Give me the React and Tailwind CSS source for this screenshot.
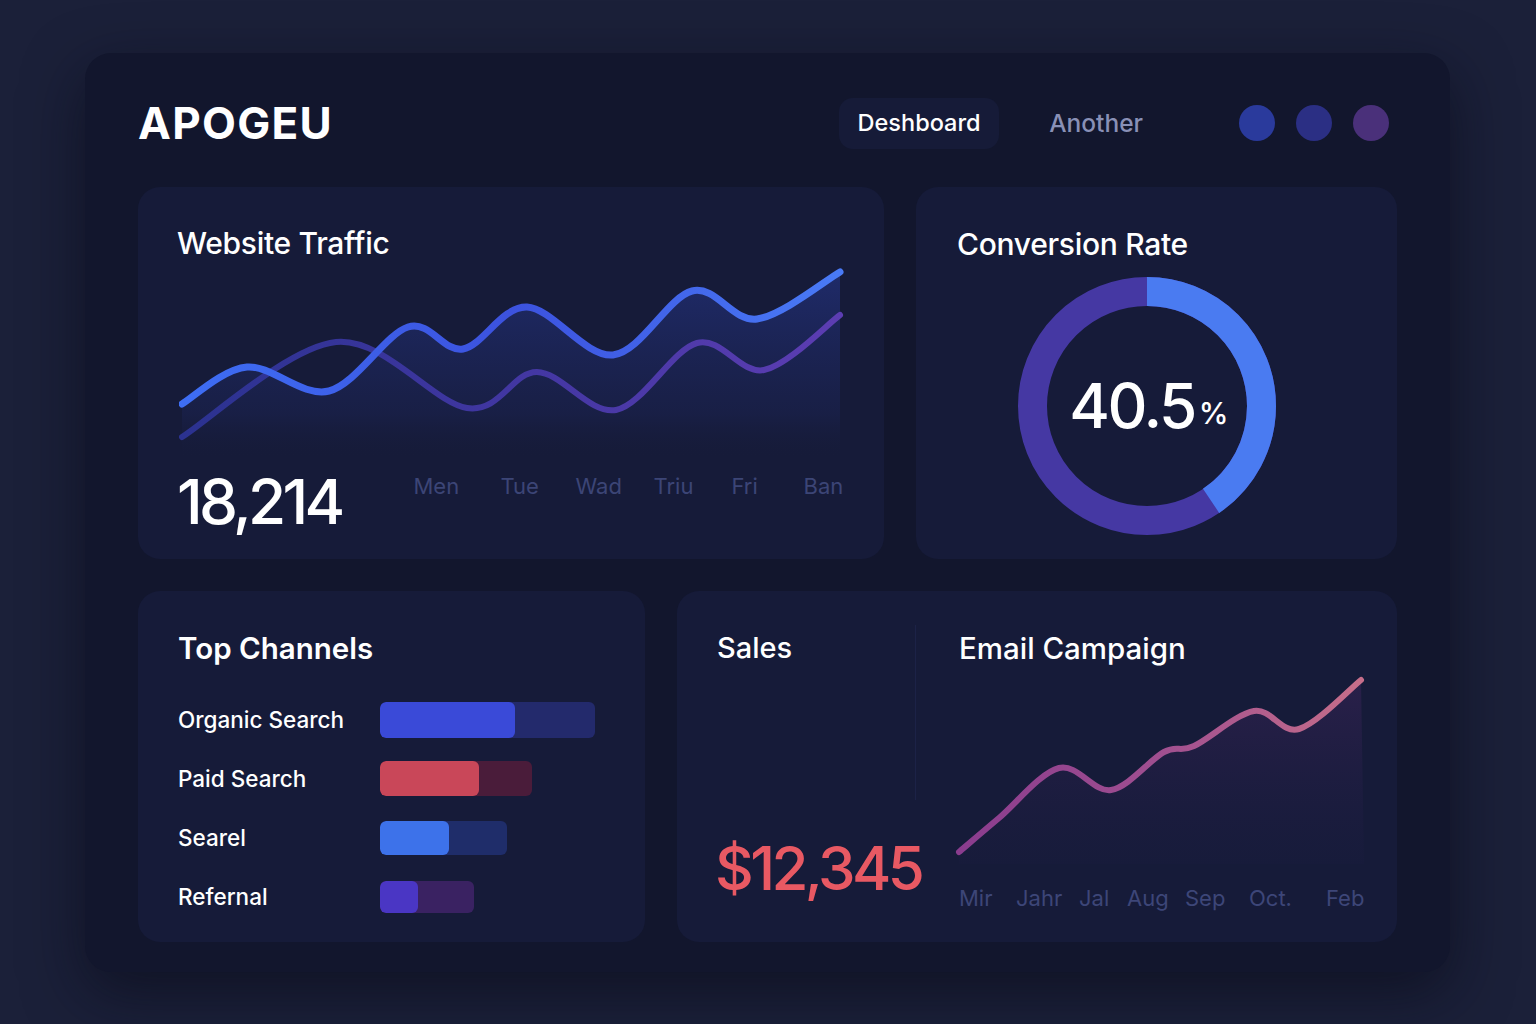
import React from "react";

// catmull-rom -> cubic bezier path
function smooth(pts) {
  let d = `M${pts[0][0]},${pts[0][1]}`;
  for (let i = 0; i < pts.length - 1; i++) {
    const p0 = pts[i - 1] || pts[i];
    const p1 = pts[i];
    const p2 = pts[i + 1];
    const p3 = pts[i + 2] || p2;
    const c1 = [p1[0] + (p2[0] - p0[0]) / 6, p1[1] + (p2[1] - p0[1]) / 6];
    const c2 = [p2[0] - (p3[0] - p1[0]) / 6, p2[1] - (p3[1] - p1[1]) / 6];
    d += ` C${c1[0]},${c1[1]} ${c2[0]},${c2[1]} ${p2[0]},${p2[1]}`;
  }
  return d;
}

const bluePts = [
  [3, 137], [68, 100], [150, 124], [229, 60], [284, 82],
  [348, 40], [434, 88], [513, 24], [578, 52], [661, 5],
];
const purplePts = [
  [3, 170], [157, 75], [288, 141], [358, 105], [437, 143],
  [518, 76], [585, 103], [661, 48],
];
const emailPts = [
  [4, 178], [44, 144], [104, 94], [156, 116], [209, 78],
  [239, 72], [299, 37], [344, 55], [406, 6],
];

// label + width of its slot (distance to next label start)
const days = [
  ["Men", 87], ["Tue", 75], ["Wad", 78], ["Triu", 78], ["Fri", 72], ["Ban", 42],
];
const months = [
  ["Mir", 57], ["Jahr", 63], ["Jal", 48], ["Aug", 58], ["Sep", 64], ["Oct.", 77], ["Feb", 40],
];

const channels = [
  { name: "Organic Search", total: 215, fill: 135, h: 36, bar: "bg-[#3a4ad8]", track: "bg-[#232a6c]" },
  { name: "Paid Search", total: 152, fill: 99, h: 35, bar: "bg-[#c94759]", track: "bg-[#4a1c3a]" },
  { name: "Searel", total: 127, fill: 69, h: 34, bar: "bg-[#3d72ea]", track: "bg-[#1f2d6a]" },
  { name: "Refernal", total: 94, fill: 38, h: 32, bar: "bg-[#4a36c4]", track: "bg-[#3a2262]" },
];

function TrafficChart() {
  const blue = smooth(bluePts);
  return (
    <svg width="665" height="194" viewBox="0 0 665 194" className="mt-[6px] ml-[2px] block">
      <defs>
        <linearGradient id="tfill" x1="0" y1="0" x2="0" y2="1">
          <stop offset="0" stopColor="#22307a" stopOpacity="0.75" />
          <stop offset="0.75" stopColor="#1b2352" stopOpacity="0.5" />
          <stop offset="1" stopColor="#161b38" stopOpacity="0" />
        </linearGradient>
        <linearGradient id="tblue" x1="0" y1="0" x2="1" y2="0">
          <stop offset="0" stopColor="#3e6ef4" />
          <stop offset="0.5" stopColor="#3c52de" />
          <stop offset="1" stopColor="#497af6" />
        </linearGradient>
        <linearGradient id="tpurple" x1="0" y1="0" x2="1" y2="0">
          <stop offset="0" stopColor="#2b3290" />
          <stop offset="0.45" stopColor="#3f36a0" />
          <stop offset="1" stopColor="#5c3db2" />
        </linearGradient>
      </defs>
      <path d={`${blue} L661,194 L3,194 Z`} fill="url(#tfill)" />
      <path d={smooth(purplePts)} fill="none" stroke="url(#tpurple)" strokeWidth="6" strokeLinecap="round" />
      <path d={blue} fill="none" stroke="url(#tblue)" strokeWidth="7" strokeLinecap="round" />
    </svg>
  );
}

function Ring() {
  const r = 114.5;
  const c = 2 * Math.PI * r;
  return (
    <div className="relative mt-[15px] ml-[61px] h-[258px] w-[258px]">
      <svg width="258" height="258" viewBox="0 0 258 258" className="block -rotate-90">
        <circle cx="129" cy="129" r={r} fill="none" stroke="#4538a3" strokeWidth="29" />
        <circle
          cx="129"
          cy="129"
          r={r}
          fill="none"
          stroke="#4a7bf1"
          strokeWidth="29"
          strokeDasharray={`${c * 0.405} ${c}`}
        />
      </svg>
      <div className="absolute inset-0 flex items-center justify-center pl-[4px]">
        <span className="text-[62px] leading-none font-medium tracking-[-0.04em] text-white">40.5</span>
        <span className="mt-[14px] ml-[4px] text-[30px] leading-none font-medium text-white">%</span>
      </div>
    </div>
  );
}

function EmailChart() {
  const line = smooth(emailPts);
  return (
    <svg width="412" height="198" viewBox="0 0 412 198" className="mt-[9px] ml-[-4px] block">
      <defs>
        <linearGradient id="efill" x1="0" y1="0" x2="0" y2="1">
          <stop offset="0" stopColor="#3a2458" stopOpacity="0.55" />
          <stop offset="1" stopColor="#1c1c42" stopOpacity="0.2" />
        </linearGradient>
        <linearGradient id="eline" x1="0" y1="0" x2="1" y2="0">
          <stop offset="0" stopColor="#8a3c8e" />
          <stop offset="0.5" stopColor="#a04f90" />
          <stop offset="1" stopColor="#c66e8a" />
        </linearGradient>
      </defs>
      <path d={`${line} L409,190 L4,190 Z`} fill="url(#efill)" />
      <path d={line} fill="none" stroke="url(#eline)" strokeWidth="6" strokeLinecap="round" />
    </svg>
  );
}

export default function App() {
  return (
    <div className="min-h-screen w-full bg-[#1b2039] pt-[53px] font-['Inter','Noto_Sans',sans-serif]">
      <div className="ml-[85px] h-[919px] w-[1365px] rounded-[26px] bg-[#12162d] px-[53px] shadow-[0_20px_60px_rgba(8,10,24,0.6)]">
        {/* Header */}
        <div className="flex h-[134px] items-center pt-[6px]">
          <div className="text-[44px] leading-none font-bold tracking-[0.03em] text-white">APOGEU</div>
          <div className="ml-auto flex items-center">
            <div className="flex h-[51px] w-[160px] items-center justify-center rounded-[14px] bg-[#161b38] text-[23.5px] font-medium text-white">
              Deshboard
            </div>
            <div className="ml-[50px] text-[24.5px] font-medium text-[#8990b6]">Another</div>
            <div className="mr-[8px] ml-[96px] flex items-center gap-[21px]">
              <div className="h-[36px] w-[36px] rounded-full bg-[#2a3a9c]" />
              <div className="h-[36px] w-[36px] rounded-full bg-[#2b2f84]" />
              <div className="h-[36px] w-[36px] rounded-full bg-[#4a307a]" />
            </div>
          </div>
        </div>

        {/* Row 1 */}
        <div className="flex gap-[32px]">
          <div className="flex h-[372px] w-[746px] flex-col rounded-[22px] bg-[#161b39] px-[39px] pt-[38px]">
            <div className="text-[30px] leading-[36px] font-medium tracking-[-0.01em] text-white">Website Traffic</div>
            <TrafficChart />
            <div className="mt-[10px] flex items-start">
              <div className="text-[62px] leading-[62px] font-medium tracking-[-0.06em] text-white">18,214</div>
              <div className="ml-[72px] flex pt-[2px] text-[22px] leading-[26px] text-[#3c4576]">
                {days.map(([d, w]) => (
                  <span key={d} style={{ width: w }}>{d}</span>
                ))}
              </div>
            </div>
          </div>

          <div className="flex h-[372px] w-[481px] flex-col rounded-[22px] bg-[#161b39] px-[41px] pt-[39px]">
            <div className="text-[30px] leading-[36px] font-medium tracking-[-0.01em] text-white">Conversion Rate</div>
            <Ring />
          </div>
        </div>

        {/* Row 2 */}
        <div className="mt-[32px] flex gap-[32px]">
          <div className="flex h-[351px] w-[507px] flex-col rounded-[22px] bg-[#161b39] px-[40px] pt-[40px]">
            <div className="text-[29.5px] leading-[34px] font-semibold text-white">Top Channels</div>
            <div className="mt-[25px] flex flex-col">
              {channels.map((c) => (
                <div key={c.name} className="flex h-[59px] items-center">
                  <div className="w-[202px] text-[22.5px] font-medium text-white">{c.name}</div>
                  <div
                    className={`flex overflow-hidden rounded-[6px] ${c.track}`}
                    style={{ width: c.total, height: c.h }}
                  >
                    <div className={`h-full rounded-[6px] ${c.bar}`} style={{ width: c.fill }} />
                  </div>
                </div>
              ))}
            </div>
          </div>

          <div className="flex h-[351px] w-[720px] rounded-[22px] bg-[#161b39]">
            <div className="flex w-[238px] flex-col pl-[38px] pt-[40px]">
              <div className="pl-[2px] text-[29px] leading-[34px] font-medium text-white">Sales</div>
              <div className="mt-[172px] whitespace-nowrap text-[60px] leading-[62px] font-medium tracking-[-0.06em] text-[#e85963]">
                $12,345
              </div>
            </div>
            <div className="mt-[34px] h-[175px] w-px bg-[#1c2247]" />
            <div className="flex flex-col pl-[43px] pt-[40px]">
              <div className="text-[29.5px] leading-[34px] font-medium text-white">Email Campaign</div>
              <EmailChart />
              <div className="mt-[13px] flex text-[22px] leading-[26px] text-[#3d4678]">
                {months.map(([m, w]) => (
                  <span key={m} style={{ width: w }}>{m}</span>
                ))}
              </div>
            </div>
          </div>
        </div>
      </div>
    </div>
  );
}
